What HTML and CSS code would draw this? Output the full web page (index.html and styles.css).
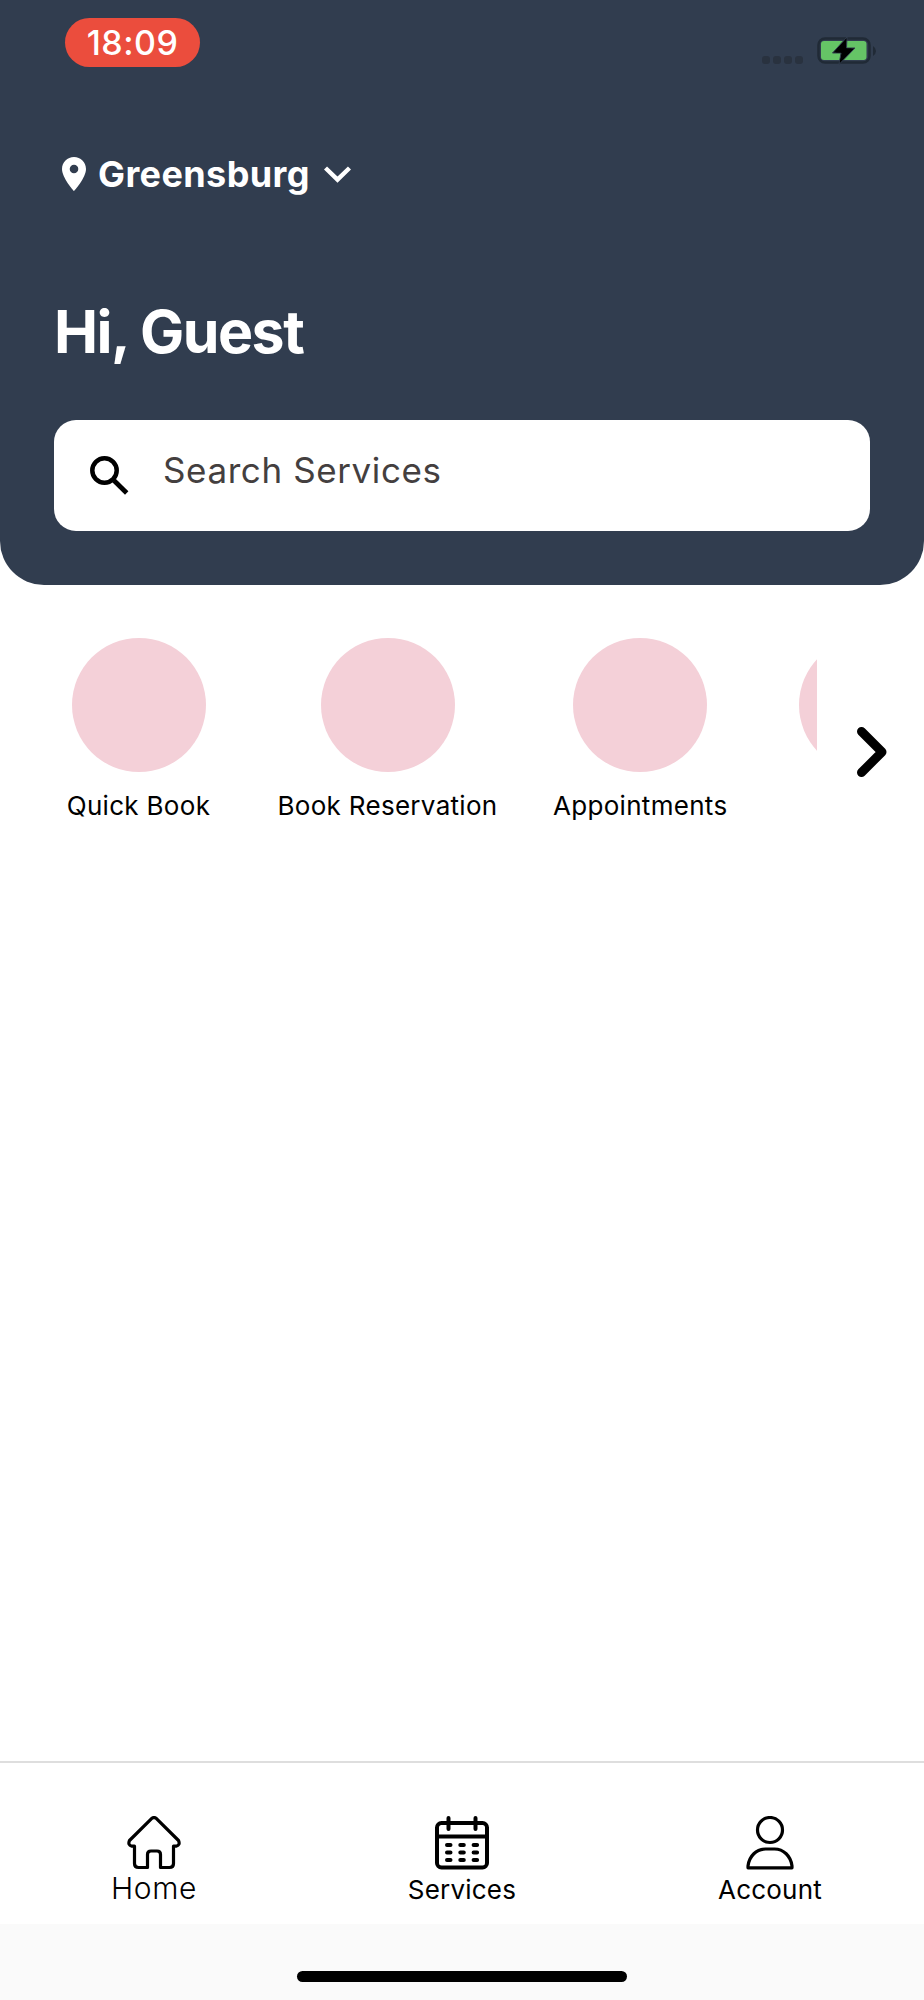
FILE: index.html
```html
<!DOCTYPE html>
<html lang="en">
  <head>
    <meta charset="UTF-8" />
    <title>Home</title>
    <link rel="stylesheet" href="styles.css">
  </head>
  <body>
    <header class="header">
      <div class="status-bar">
        <span class="time">18:09</span>
        <div class="status-icons">
          <div class="signal"><i></i><i></i><i></i><i></i></div>
          <svg class="battery" width="60" height="30" viewBox="0 0 60 30">
            <rect x="1.500" y="2.500" width="51" height="24" rx="6.500" fill="none" stroke="#202a36" stroke-width="2.500" />
            <path d="M56 10v10q3-2 3-5t-3-5z" fill="#202a36" />
            <rect x="4" y="5" width="45.500" height="19" rx="3" fill="#65c466" />
            <path d="M30 1L15.500 17h8.500L22 28.500L38 12h-8.500z" fill="#000" stroke="#313d4f" stroke-width="1" />
            <path d="M29.500 3L19 16.500h6.500L22.500 26.500L34.500 12.500h-7z" fill="#000" />
          </svg>
        </div>
      </div>

      <div class="location">
        <svg width="24" height="34" viewBox="5 2 14 20" preserveAspectRatio="none">
          <path d="M12 2C8.130 2 5 5.130 5 9c0 5.250 7 13 7 13s7-7.750 7-13c0-3.870-3.130-7-7-7zm0 9.500a2.500 2.500 0 1 1 0-5 2.500 2.500 0 0 1 0 5z" fill="#fff" />
        </svg>
        <span class="city">Greensburg</span>
        <svg class="chevron" width="27" height="17" viewBox="0 0 27 17">
          <path d="M1.500 2L13.500 13.700L25.500 2" fill="none" stroke="#fff" stroke-width="4.400" />
        </svg>
      </div>

      <h1 class="greeting">Hi, Guest</h1>

      <div class="search">
        <svg width="39" height="39" viewBox="0 0 39 39">
          <circle cx="14.500" cy="14.500" r="12.200" fill="none" stroke="#000" stroke-width="4.500" />
          <path d="M24 24.500L36.700 37" fill="none" stroke="#000" stroke-width="4.800" />
        </svg>
        <span class="placeholder">Search Services</span>
      </div>
    </header>

    <main class="content">
      <div class="services">
        <div class="service">
          <div class="circle"></div>
          <span class="label">Quick Book</span>
        </div>
        <div class="service">
          <div class="circle"></div>
          <span class="label">Book Reservation</span>
        </div>
        <div class="service">
          <div class="circle"></div>
          <span class="label">Appointments</span>
        </div>
        <div class="service">
          <div class="circle"></div>
        </div>
      </div>
      <svg class="next" width="30" height="50" viewBox="0 0 30 50">
        <path d="M4.500 4.500L25 25L4.500 45.500" fill="none" stroke="#000" stroke-width="9" stroke-linecap="round" stroke-linejoin="round" />
      </svg>
    </main>

    <nav class="tabs">
      <div class="tab active">
        <svg width="54" height="54" viewBox="0 0 54 54" fill="none" stroke="#000" stroke-width="3.200" stroke-linejoin="round">
          <path d="M24.800 2.300Q27 .700 29.200 2.300L51.500 24.500Q53.500 29.200 49.200 30.200H46.500V47.500Q46.500 51.500 42.500 51.500H33.500V38.500Q33.500 35 30 35H24Q20.500 35 20.500 38.500V51.500H11.500Q7.500 51.500 7.500 47.500V30.200H4.800Q.500 29.200 2.500 24.500Z" />
        </svg>
        <span class="tab-label">Home</span>
      </div>
      <div class="tab">
        <svg width="54" height="54" viewBox="0 0 54 54" fill="none" stroke="#000" stroke-width="4" stroke-linecap="round">
          <rect x="2" y="7" width="50" height="44.500" rx="4.500" />
          <path d="M2 20.500H52M13.500 2v11M40.500 2v11" />
          <path d="M12 29h3.500M25.300 29h3.500M38.600 29h3.500M12 36.500h3.500M25.300 36.500h3.500M38.600 36.500h3.500M12 44h3.500M25.300 44h3.500M38.600 44h3.500" />
        </svg>
        <span class="tab-label">Services</span>
      </div>
      <div class="tab">
        <svg width="54" height="54" viewBox="0 0 54 54" fill="none" stroke="#000" stroke-width="3.200" stroke-linejoin="round">
          <circle cx="27" cy="14" r="12.500" />
          <path d="M5 51.800V50C6.200 40 13.500 33 22.500 33H31.500C40.500 33 47.800 40 49 50V51.800Z" />
        </svg>
        <span class="tab-label">Account</span>
      </div>
    </nav>

    <div class="bottom-area">
      <div class="home-indicator"></div>
    </div>
  </body>
</html>
```

FILE: styles.css
```css
* {
  box-sizing: border-box;
}
body {
  margin: 0;
  height: 2000px;
  display: flex;
  flex-direction: column;
  font-family: Inter, "Liberation Sans", sans-serif;
  background-color: #fff;
  color: #000;
  overflow: hidden;
}
svg {
  display: block;
  flex: none;
}
.header {
  height: 585px;
  padding: 18px 54px 0;
  background-color: #313d4f;
  border-radius: 0 0 44px 44px;
  color: #fff;
}
.status-bar {
  display: flex;
  justify-content: space-between;
  align-items: flex-start;
  height: 139px;
}
.time {
  width: 135px;
  height: 49px;
  margin-left: 11px;
  border-radius: 25px;
  background-color: #eb4d3d;
  font-size: 34px;
  font-weight: 500;
  line-height: 49px;
  letter-spacing: 0.5px;
  text-align: center;
}
.status-icons {
  display: flex;
  align-items: flex-end;
  margin: 18px -7px 0 0;
}
.signal {
  display: flex;
  gap: 3px;
  margin: 0 14px 2px 0;
}
.signal i {
  width: 8px;
  height: 8px;
  border-radius: 3px;
  background-color: #29323f;
}
.location {
  display: flex;
  align-items: center;
  height: 34px;
  margin-left: 8px;
}
.city {
  width: 210px;
  margin-left: 12px;
  font-size: 36px;
  font-weight: 700;
  line-height: 34px;
  letter-spacing: 0.4px;
  white-space: nowrap;
}
.chevron {
  margin-left: 16px;
  margin-top: 1px;
}
.greeting {
  margin: 105px 0 0;
  font-size: 59px;
  font-weight: 700;
  line-height: 72px;
  letter-spacing: -1.5px;
}
.search {
  display: flex;
  align-items: center;
  height: 111px;
  margin-top: 52px;
  padding-left: 36px;
  border-radius: 22px;
  background-color: #fff;
}
.placeholder {
  margin: -12px 0 0 34px;
  color: #443f3f;
  font-size: 35px;
  font-weight: 400;
  letter-spacing: 0.6px;
}
.content {
  flex: 1;
  display: flex;
  align-items: flex-start;
  padding: 53px 37px 0 55px;
}
.services {
  display: flex;
  gap: 55.5px;
  width: 762px;
  overflow: hidden;
}
.service {
  display: flex;
  flex: none;
  flex-direction: column;
  align-items: center;
  min-width: 167px;
}
.circle {
  width: 134px;
  height: 134px;
  border-radius: 50%;
  background-color: #f4d0d8;
}
.label {
  margin-top: 18px;
  font-size: 26px;
  line-height: 32px;
  letter-spacing: 0.3px;
}
.next {
  margin: 89px 0 0 40px;
}
.tabs {
  display: flex;
  height: 163px;
  border-top: 2px solid #dedede;
}
.tab {
  flex: 1;
  display: flex;
  flex-direction: column;
  align-items: center;
  padding-top: 53px;
}
.tab-label {
  margin-top: 4px;
  font-size: 26px;
  line-height: 32px;
  letter-spacing: 0.2px;
}
.active .tab-label {
  margin-top: 2px;
  font-size: 30px;
  font-weight: 300;
  letter-spacing: 0.6px;
}
.bottom-area {
  height: 76px;
  padding-top: 47px;
  background-color: #fafafa;
}
.home-indicator {
  width: 330px;
  height: 11px;
  margin: 0 auto;
  border-radius: 6px;
  background-color: #000;
}
```
